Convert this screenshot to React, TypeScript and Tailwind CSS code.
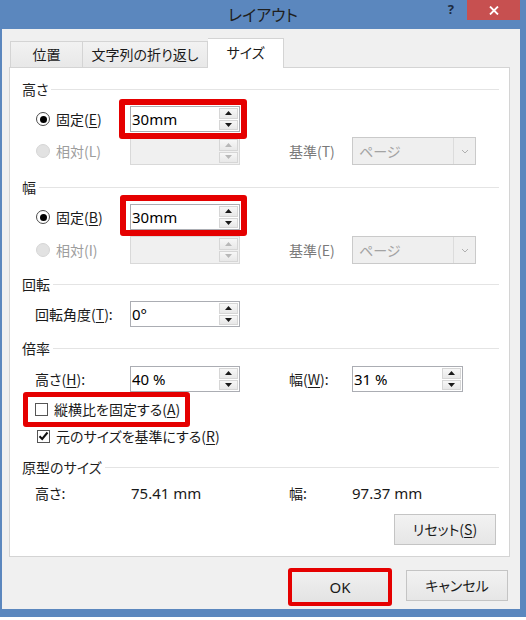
import React from 'react';

const jp = "font-['Meiryo_UI','Noto_Sans_CJK_JP',sans-serif] [font-feature-settings:'palt']";
const num = "font-['Segoe_UI','Noto_Sans','Noto_Sans_CJK_JP',sans-serif]";

function Spinner({ disabled }: { disabled?: boolean }) {
  const c = disabled ? '#b8b8b8' : '#1a1a1a';
  return (
    <div className="flex flex-col w-[20px] h-full py-[1px] pr-[1px] gap-[1px]">
      <div className="flex-1 flex items-center justify-center border border-[#d6d6d6] bg-gradient-to-b from-[#f7f7f7] to-[#e8e8e8]">
        <svg width="7" height="4" viewBox="0 0 7 4"><path d="M3.5 0L7 4H0z" fill={c} /></svg>
      </div>
      <div className="flex-1 flex items-center justify-center border border-[#d6d6d6] bg-gradient-to-b from-[#f7f7f7] to-[#e8e8e8]">
        <svg width="7" height="4" viewBox="0 0 7 4"><path d="M0 0H7L3.5 4z" fill={c} /></svg>
      </div>
    </div>
  );
}

function NumInput({ value, disabled, w = 'w-[110px]' }: { value?: string; disabled?: boolean; w?: string }) {
  return (
    <div
      className={`${w} ${disabled ? 'h-[28px] bg-[#f0f0f0] border-[#d9d9d9]' : 'h-[26px] bg-white border-[#abadb3]'} border flex items-stretch`}
    >
      <div className={`${num} flex-1 flex items-center pl-[1px] text-[15px] text-black`}>{value}</div>
      <Spinner disabled={disabled} />
    </div>
  );
}

function Radio({ checked, disabled }: { checked?: boolean; disabled?: boolean }) {
  if (disabled) {
    return <span className="w-[14px] h-[14px] rounded-full bg-[#e2e2e2] border border-[#d6d6d6]" />;
  }
  return (
    <span className="w-[14px] h-[14px] rounded-full border border-[#4a4a4a] bg-white flex items-center justify-center">
      {checked && <span className="w-[7px] h-[7px] rounded-full bg-black" />}
    </span>
  );
}

function Checkbox({ checked }: { checked?: boolean }) {
  return (
    <span className="w-[13px] h-[13px] border border-[#555] bg-white flex items-center justify-center">
      {checked && (
        <svg width="11" height="10" viewBox="0 0 11 10">
          <path d="M1.5 5.2L4.2 8L9.5 1.5" fill="none" stroke="#111" strokeWidth="2" />
        </svg>
      )}
    </span>
  );
}

function PageSelect() {
  return (
    <div className="w-[124px] h-[28px] border border-[#cacaca] bg-[#efefef] flex">
      <div className={`${jp} flex-1 flex items-center pl-[6px] text-[14px] text-[#a3a3a3]`}>ページ</div>
      <div className="w-[22px] border-l border-[#dcdcdc] flex items-center justify-center">
        <svg width="8" height="5" viewBox="0 0 8 5"><path d="M1 1L4 4L7 1" fill="none" stroke="#b0b0b0" strokeWidth="1" /></svg>
      </div>
    </div>
  );
}

function Section({ title, mt }: { title: string; mt: string }) {
  return (
    <div className={`${mt} h-[16px] flex items-center gap-[3px] pl-[12px] pr-[10px]`}>
      <span className="text-[14px] leading-none text-[#1e1e1e]">{title}</span>
      <div className="flex-1 h-px bg-[#e4e4e4]" />
    </div>
  );
}

function U({ children }: { children: React.ReactNode }) {
  return <span className="underline underline-offset-[2px] decoration-1">{children}</span>;
}

function RedBox({ cls }: { cls: string }) {
  return <span className={`absolute ${cls} border-[#e50000] rounded-[3px] pointer-events-none`} />;
}

export default function App() {
  return (
    <div className={`${jp} w-[526px] h-[620px] bg-white text-[#1a1a1a]`}>
      <div className="h-[617px] bg-[#5b87be] flex flex-col">
        {/* title bar */}
        <div className="h-[29px] grid grid-cols-[1fr_auto_1fr]">
          <div />
          <div className="text-[16px] text-[#1f1f1f] pt-[3px] leading-[22px]">レイアウト</div>
          <div className="flex justify-end items-start pr-[6px]">
            <span className={`${num} text-[13px] font-bold text-[#1d2b3f] leading-none mt-[3px] mr-[13px]`}>?</span>
            <div className="w-[53px] h-[20px] bg-[#c75050] flex items-center justify-center">
              <svg width="10" height="9" viewBox="0 0 10 9">
                <path d="M1 0.5L9 8.5M9 0.5L1 8.5" stroke="#fff" strokeWidth="1.8" />
              </svg>
            </div>
          </div>
        </div>

        {/* body */}
        <div className="ml-[2px] w-[518px] h-[580px] bg-[#f0f0f0] pl-[7px] pt-[9px]">
          {/* tabs */}
          <div className="flex items-end h-[29px] pl-[1px]">
            <div className="w-[73px] h-[26px] border border-b-0 border-[#d4d4d4] bg-gradient-to-b from-[#f2f2f2] to-[#e8e8e8] flex items-center justify-center text-[14px]">
              位置
            </div>
            <div className="w-[125px] h-[26px] border border-l-0 border-b-0 border-[#d4d4d4] bg-gradient-to-b from-[#f2f2f2] to-[#e8e8e8] flex items-center justify-center text-[14px]">
              文字列の折り返し
            </div>
            <div className="w-[76px] h-[30px] -mb-px relative z-10 border border-l-0 border-b-0 border-[#d4d4d4] bg-white flex items-center justify-center text-[14px] pb-[2px]">
              サイズ
            </div>
          </div>

          {/* panel */}
          <div className="w-[501px] h-[490px] border border-[#d4d4d4] bg-white flex flex-col">
            <Section title="高さ" mt="mt-[13px]" />
            <div className="mt-[6px] h-[32px] flex items-center">
              <div className="w-[120px] pl-[26px] flex items-center gap-[6px] text-[14px]">
                <Radio checked />
                <span>固定(<U>E</U>)</span>
              </div>
              <div className="relative">
                <NumInput value="30mm" />
                <RedBox cls="-left-[11px] -right-[7px] -top-[7px] -bottom-[7px] border-[6px]" />
              </div>
            </div>
            <div className="h-[32px] flex items-center">
              <div className="w-[120px] pl-[26px] flex items-center gap-[6px] text-[14px] text-[#9d9d9d]">
                <Radio disabled />
                <span>相対(L)</span>
              </div>
              <NumInput disabled />
              <div className="w-[49px]" />
              <div className="w-[63px] text-[14px] text-[#7a7a7a]">基準(T)</div>
              <PageSelect />
            </div>

            <Section title="幅" mt="mt-[12px]" />
            <div className="mt-[6px] h-[32px] flex items-center">
              <div className="w-[120px] pl-[26px] flex items-center gap-[6px] text-[14px]">
                <Radio checked />
                <span>固定(<U>B</U>)</span>
              </div>
              <div className="relative">
                <NumInput value="30mm" />
                <RedBox cls="-left-[10px] -right-[7px] -top-[9px] -bottom-[6px] border-[6px]" />
              </div>
            </div>
            <div className="mt-[1px] h-[32px] flex items-center">
              <div className="w-[120px] pl-[26px] flex items-center gap-[6px] text-[14px] text-[#9d9d9d]">
                <Radio disabled />
                <span>相対(I)</span>
              </div>
              <NumInput disabled />
              <div className="w-[49px]" />
              <div className="w-[63px] text-[14px] text-[#7a7a7a]">基準(E)</div>
              <PageSelect />
            </div>

            <Section title="回転" mt="mt-[10px]" />
            <div className="mt-[6px] h-[32px] flex items-center">
              <div className="w-[120px] pl-[25px] text-[14px]">
                回転角度(<U>T</U>):
              </div>
              <NumInput value="0°" />
            </div>

            <Section title="倍率" mt="mt-[10px]" />
            <div className="mt-[7px] h-[32px] flex items-center">
              <div className="w-[120px] pl-[25px] text-[14px]">
                高さ(<U>H</U>):
              </div>
              <NumInput value="40 %" />
              <div className="w-[49px]" />
              <div className="w-[63px] text-[14px]">
                幅(<U>W</U>):
              </div>
              <NumInput value="31 %" w="w-[111px]" />
            </div>
            <div className="h-[28px] flex items-center">
              <div className="relative pl-[25px] flex items-center gap-[6px] text-[14px]">
                <Checkbox />
                <span>縦横比を固定する(<U>A</U>)</span>
                <RedBox cls="left-[13px] -right-[10px] -top-[7px] -bottom-[7px] border-[5px]" />
              </div>
            </div>
            <div className="h-[26px] flex items-center">
              <div className="pl-[27px] flex items-center gap-[6px] text-[14px]">
                <Checkbox checked />
                <span>元のサイズを基準にする(<U>R</U>)</span>
              </div>
            </div>

            <Section title="原型のサイズ" mt="mt-[10px]" />
            <div className="mt-[4px] h-[28px] flex items-center text-[14px]">
              <div className="w-[121px] pl-[25px]">高さ:</div>
              <div className={`${num} w-[158px] text-[15px]`}>75.41 mm</div>
              <div className="w-[63px]">幅:</div>
              <div className={`${num} text-[15px]`}>97.37 mm</div>
            </div>
            <div className="mt-[7px] flex justify-end pr-[13px]">
              <div className="w-[102px] h-[31px] border border-[#c4c4c4] bg-gradient-to-b from-[#f2f2f2] to-[#e6e6e6] flex items-center justify-center text-[14px]">
                リセット(<U>S</U>)
              </div>
            </div>
          </div>

          {/* buttons */}
          <div className="mt-[11px] flex justify-end items-start gap-[14px] pr-[12px]">
            <div className="w-[104px] h-[38px] border-[4px] border-[#e50000] rounded-[3px] bg-[#e6e6e6]">
              <div className={`${num} w-full h-full bg-gradient-to-b from-[#f0f0f0] to-[#e3e3e3] flex items-center justify-center text-[15px]`}>
                OK
              </div>
            </div>
            <div className="mt-[2px] w-[102px] h-[31px] border border-[#c4c4c4] bg-gradient-to-b from-[#f2f2f2] to-[#e6e6e6] flex items-center justify-center text-[14px]">
              キャンセル
            </div>
          </div>
        </div>
      </div>
    </div>
  );
}
